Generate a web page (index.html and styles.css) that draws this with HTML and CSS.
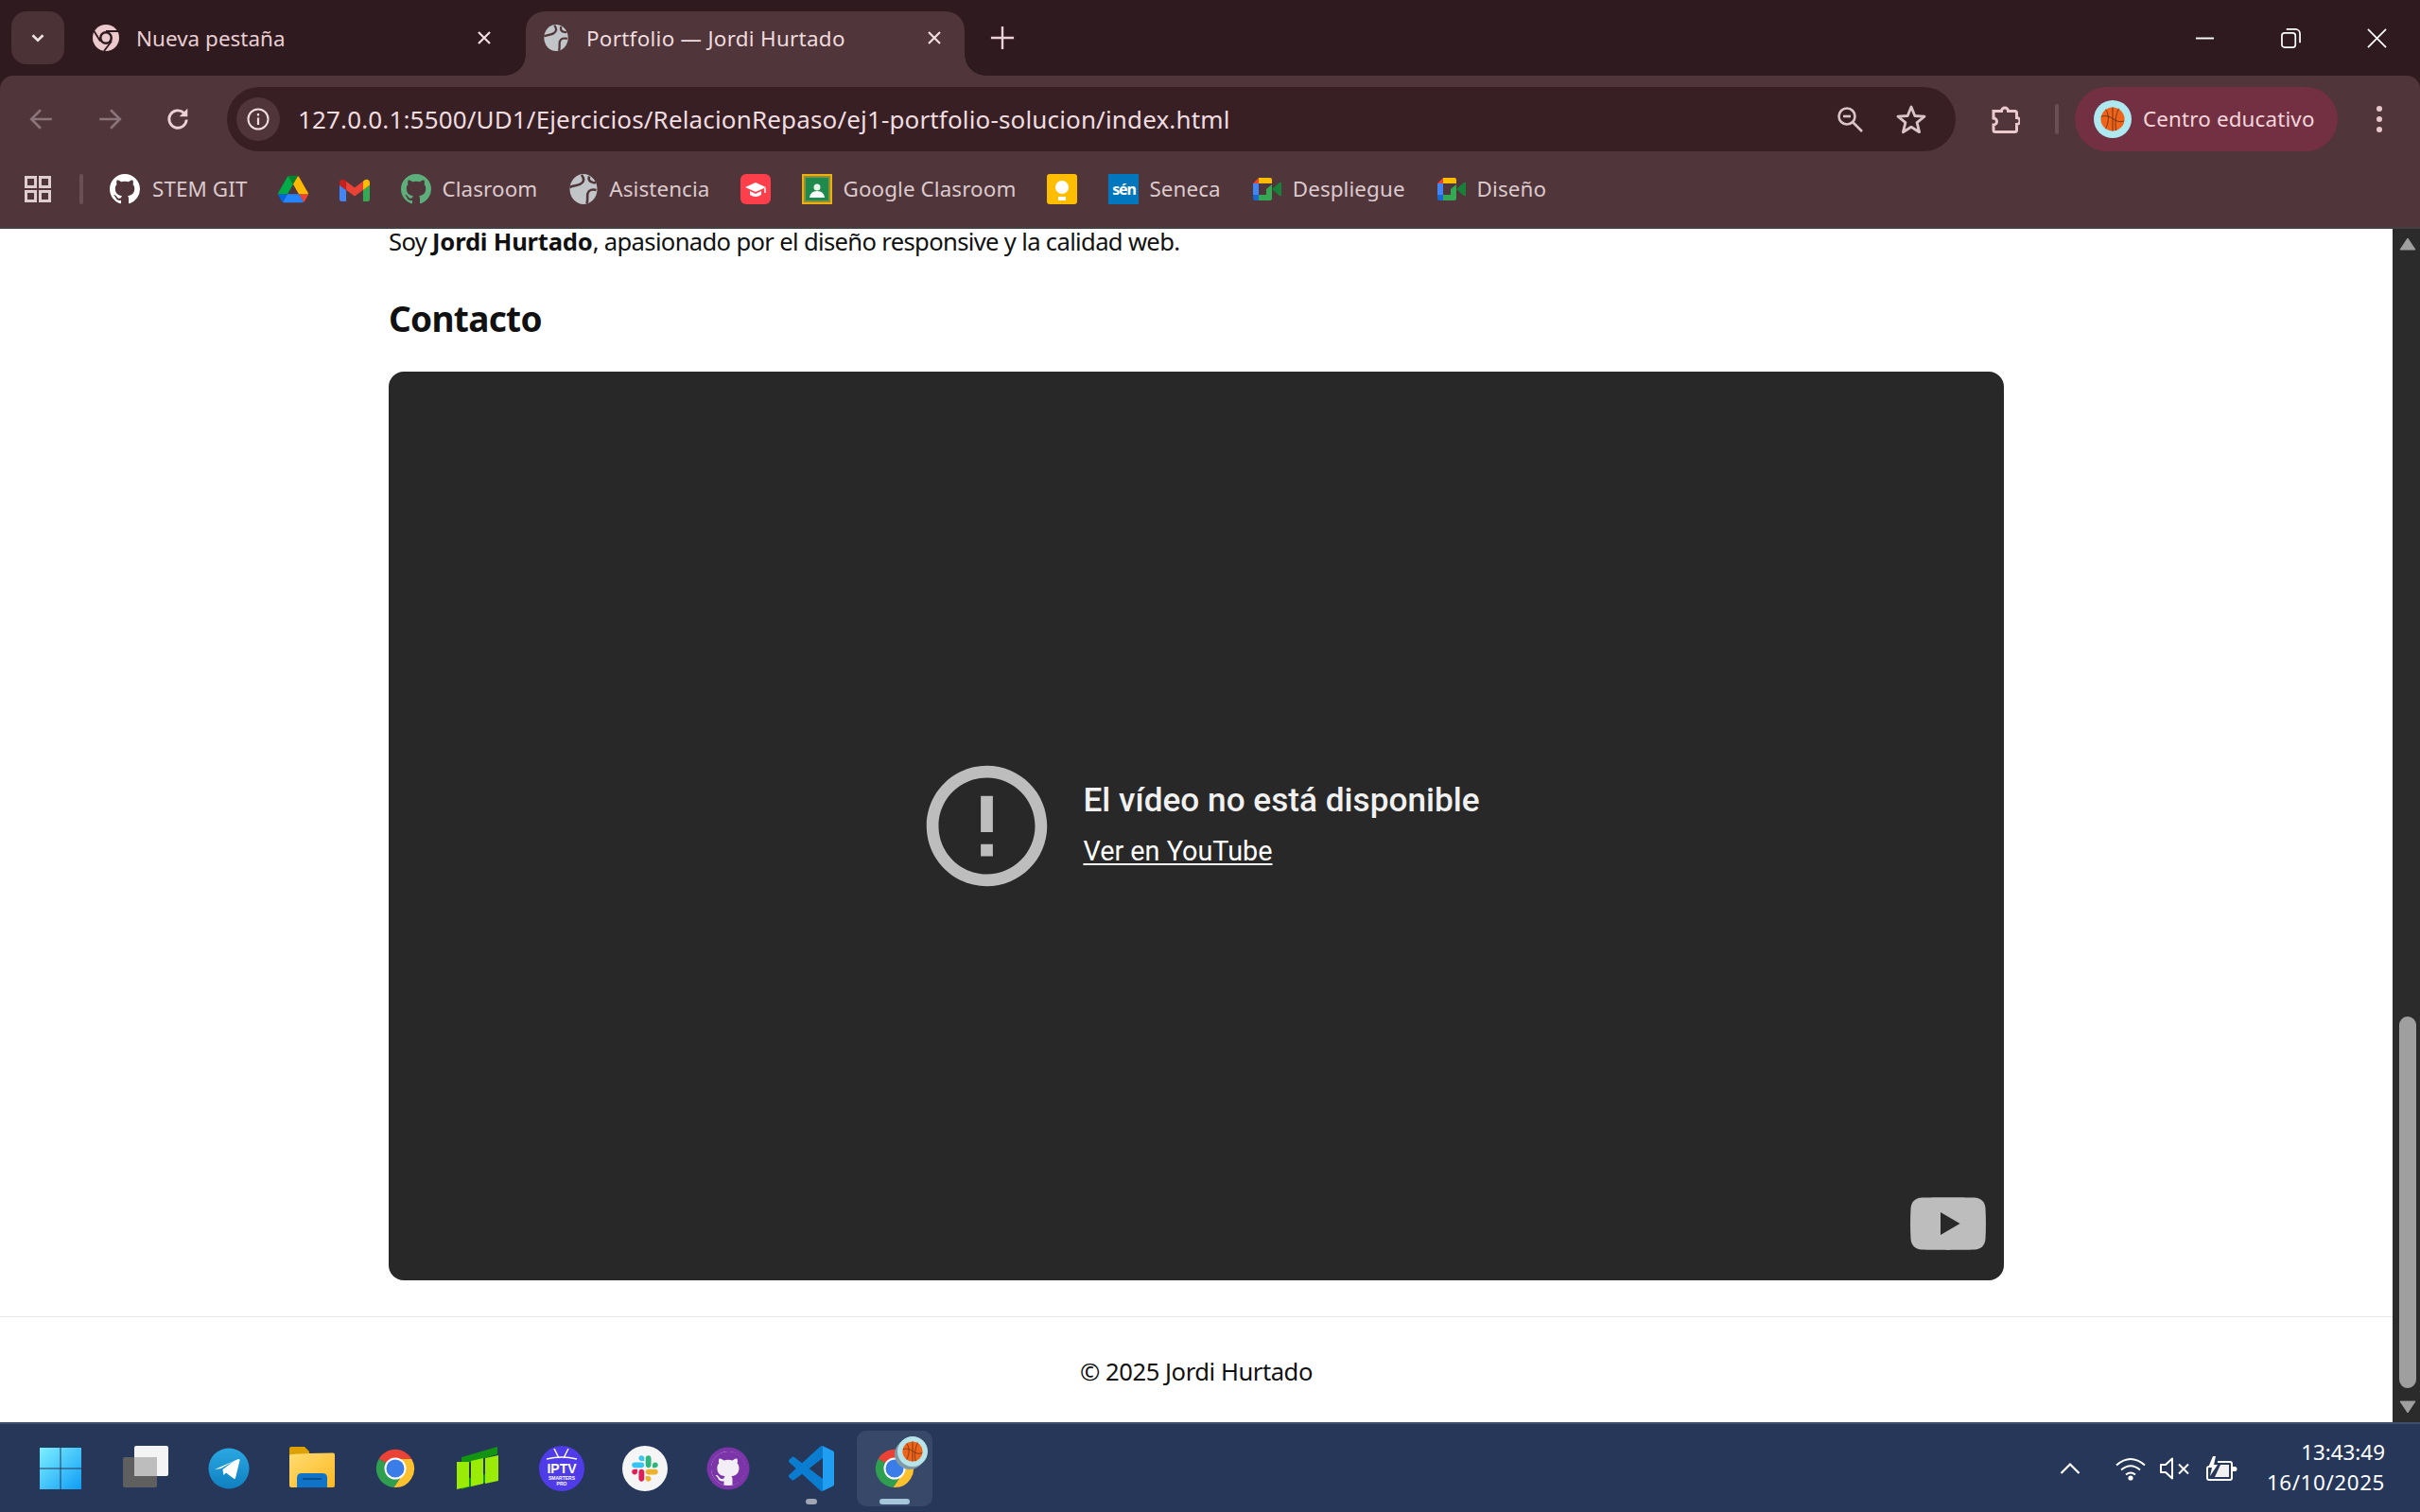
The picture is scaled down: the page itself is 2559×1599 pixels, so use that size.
FILE: index.html
```html
<!DOCTYPE html>
<html lang="es">
<head>
<meta charset="utf-8">
<title>Portfolio — Jordi Hurtado</title>
<link rel="stylesheet" href="styles.css">
</head>
<body>
<svg class="defs" aria-hidden="true">
  <defs>
    <linearGradient id="winG" x1="0" y1="0" x2="1" y2="1"><stop offset="0" stop-color="#7df0ff"/><stop offset="1" stop-color="#0f9cf5"/></linearGradient>
    <linearGradient id="folderG" x1="0" y1="0" x2="1" y2="1"><stop offset="0" stop-color="#ffdc70"/><stop offset="1" stop-color="#fdb924"/></linearGradient>
    <linearGradient id="tgG" x1="0" y1="0" x2="0" y2="1"><stop offset="0" stop-color="#2aa8e2"/><stop offset="1" stop-color="#0f80c0"/></linearGradient>
    <symbol id="octo" viewBox="0 0 24 24"><path d="M12 0C5.37 0 0 5.37 0 12c0 5.3 3.44 9.8 8.2 11.39.6.11.82-.26.82-.58v-2.03c-3.34.73-4.04-1.61-4.04-1.61-.55-1.39-1.33-1.76-1.33-1.76-1.09-.74.08-.73.08-.73 1.2.08 1.84 1.24 1.84 1.24 1.07 1.83 2.81 1.3 3.5 1 .11-.78.42-1.31.76-1.61-2.66-.3-5.46-1.33-5.46-5.93 0-1.31.47-2.38 1.24-3.22-.12-.3-.54-1.52.12-3.18 0 0 1-.32 3.3 1.23a11.5 11.5 0 0 1 6 0c2.29-1.55 3.3-1.23 3.3-1.23.65 1.66.24 2.88.12 3.18.77.84 1.23 1.91 1.23 3.22 0 4.61-2.8 5.63-5.48 5.92.43.37.81 1.1.81 2.22v3.29c0 .32.22.7.83.58A12 12 0 0 0 24 12C24 5.37 18.63 0 12 0z"/></symbol>
    <symbol id="globe" viewBox="0 0 32 32"><ellipse cx="16" cy="16" rx="14.500" ry="16" fill="#c2c5c8"/><path d="M14 1c3 4 3 7-1 9.500-3 2-7 1.500-11.500 3.500M29.500 17c-4-1-8 0-9 3.500-1 3 .5 6-1 11M22 2.500c-1 3 0 6 4 6.500 1 0 2 0 3 .5" fill="none" stroke="#50353a" stroke-width="2.600"/></symbol>
    <symbol id="chromeLogo" viewBox="0 0 48 48"><path fill="#ea4335" d="M6.700 13.700A20 20 0 0 1 41.320 14H24a10 10 0 0 0-8.660 5z"/><path fill="#2f9e50" d="M6.700 13.700 15.340 19A10 10 0 0 0 32.660 29L22.600 44A20 20 0 0 1 6.700 13.700z"/><path fill="#fcc22d" d="M41.320 14H24a10 10 0 0 1 8.660 15L22.600 44A20 20 0 0 0 41.320 14z"/><circle cx="24" cy="24" r="11.500" fill="#fff"/><circle cx="24" cy="24" r="9.500" fill="#3b7de8"/></symbol>
    <symbol id="meet" viewBox="0 0 30 24"><path fill="#fbbc04" d="M6 0h12a2 2 0 0 1 2 2v4H6z"/><path fill="#ea4335" d="M6 0 0 6h6z"/><path fill="#4285f4" d="M0 6h6v12H0z"/><path fill="#1967d2" d="M0 18h6v6H2a2 2 0 0 1-2-2z"/><path fill="#34a853" d="M6 18h8v-6l6-5v15a2 2 0 0 1-2 2H6z"/><path fill="#188038" d="m20 12 8-7q2-1 2 1v12q0 2-2 1l-8-7z"/></symbol>
    <symbol id="ball" viewBox="0 0 28 28"><circle cx="14" cy="14" r="13.500" fill="#f0641a"/><path d="M14 .5v27M1 11c6-2 11 1 14 3s7 4 12 2M6 3c4 5 4 14 0 22M21 2c-3 6-5 15-3 25" fill="none" stroke="#5a2c12" stroke-width=".9"/></symbol>
  </defs>
</svg>

<div class="tabstrip">
  <button class="tab-search" type="button"><svg class="ic-chev" viewBox="0 0 14 10"><path d="m2 2 5 5 5-5" fill="none" stroke="#f0e0e3" stroke-width="2.400"/></svg></button>
  <div class="tab">
    <svg class="tab-fav" viewBox="0 0 28 28"><circle cx="14" cy="14" r="14" fill="#ecc9cd"/><circle cx="14" cy="14" r="7" fill="#2f1a1f"/><circle cx="14" cy="14" r="4.500" fill="#ecc9cd"/><path d="M14 7h13M8 17.500 1.500 7M20 17.500 12 28" stroke="#2f1a1f" stroke-width="1.800" fill="none"/></svg>
    <span class="tab-title">Nueva pestaña</span>
    <svg class="tab-x" viewBox="0 0 16 16"><path d="m2 2 12 12M14 2 2 14" stroke="#f0dfe2" stroke-width="2.200"/></svg>
  </div>
  <div class="tab tab-active">
    <svg class="tab-fav"><use href="#globe"/></svg>
    <span class="tab-title">Portfolio — Jordi Hurtado</span>
    <svg class="tab-x" viewBox="0 0 16 16"><path d="m2 2 12 12M14 2 2 14" stroke="#f0dfe2" stroke-width="2.200"/></svg>
  </div>
  <svg class="tab-new" viewBox="0 0 28 28"><path d="M14 1v26M1 14h26" stroke="#ecd3d7" stroke-width="2.600"/></svg>
  <div class="winctl">
    <span class="winctl-cell"><svg class="ic-win" viewBox="0 0 22 22"><path d="M1 11h20" stroke="#fff" stroke-width="2"/></svg></span>
    <span class="winctl-cell"><svg class="ic-win" viewBox="0 0 22 22"><rect x="1" y="5" width="15" height="16" rx="3" fill="none" stroke="#fff" stroke-width="1.800"/><path d="M6 1h10a5 5 0 0 1 5 5v10" fill="none" stroke="#fff" stroke-width="1.800"/></svg></span>
    <span class="winctl-cell"><svg class="ic-win" viewBox="0 0 22 22"><path d="m1 1 20 20M21 1 1 21" stroke="#fff" stroke-width="1.800"/></svg></span>
  </div>
</div>

<div class="toolbar">
  <div class="navrow">
    <span class="nav-cell"><svg class="ic-nav" viewBox="0 0 24 24"><path d="M22 12H3m8-9-9 9 9 9" fill="none" stroke="#8a757a" stroke-width="2.400"/></svg></span>
    <span class="nav-cell"><svg class="ic-nav" viewBox="0 0 24 24"><path d="M2 12h19m-8-9 9 9-9 9" fill="none" stroke="#8a757a" stroke-width="2.400"/></svg></span>
    <span class="nav-cell"><svg class="ic-nav" viewBox="0 0 24 24"><path d="M20.500 12.500a8.500 8.500 0 1 1-2.500-6.500" fill="none" stroke="#ecd3d7" stroke-width="2.600"/><path d="M21.500 1.500v8h-8z" fill="#ecd3d7"/></svg></span>
    <div class="omnibox">
      <span class="site-info"><svg class="ic-info" viewBox="0 0 24 24"><circle cx="12" cy="12" r="10.500" fill="none" stroke="#f0dfe2" stroke-width="2"/><path d="M12 10.500V18M12 6v2.400" stroke="#f0dfe2" stroke-width="2.200"/></svg></span>
      <span class="url">127.0.0.1:5500/UD1/Ejercicios/RelacionRepaso/ej1-portfolio-solucion/index.html</span>
      <svg class="ic-zoom" viewBox="0 0 28 28"><circle cx="11" cy="11" r="8.500" fill="none" stroke="#d9c4c8" stroke-width="2.600"/><path d="M7 11h8" stroke="#d9c4c8" stroke-width="2.600"/><path d="m17 17 10 10" stroke="#d9c4c8" stroke-width="2.600"/></svg>
      <svg class="ic-star" viewBox="0 0 32 32"><path d="m16 3 3.800 9.500 10.200.7-7.900 6.500 2.500 10L16 24.300 7.400 29.700l2.500-10L2 13.200l10.200-.7z" fill="none" stroke="#d9c4c8" stroke-width="2.800" stroke-linejoin="round"/></svg>
    </div>
    <span class="ext-cell"><svg class="ic-ext" viewBox="0 0 30 32"><path d="M2 7.500h8.500a3.500 3.500 0 0 1 7 0h7q2 0 2 2v5a3.500 3.500 0 0 1 0 7v6q0 2-2 2H4q-2 0-2-2V22a3.500 3.500 0 0 0 0-7z" fill="none" stroke="#ecc9cd" stroke-width="3"/></svg></span>
    <span class="tool-sep"></span>
    <div class="profile">
      <span class="avatar"><svg class="ic-ball"><use href="#ball"/></svg></span>
      <span class="profile-name">Centro educativo</span>
    </div>
    <span class="menu-cell"><svg class="ic-menu" viewBox="0 0 6 28"><circle cx="3" cy="3" r="3" fill="#e6c8cc"/><circle cx="3" cy="14" r="3" fill="#e6c8cc"/><circle cx="3" cy="25" r="3" fill="#e6c8cc"/></svg></span>
  </div>

  <div class="bookmarks">
    <svg class="ic-apps" viewBox="0 0 28 28"><path d="M1.500 1.500h10v10h-10zM16.500 1.500h10v10h-10zM1.500 16.500h10v10h-10zM16.500 16.500h10v10h-10z" fill="none" stroke="#e0cdd1" stroke-width="3"/></svg>
    <span class="bm-sep"></span>
    <span class="bm bm-first"><svg class="fav fav-white"><use href="#octo"/></svg><span class="bm-label">STEM GIT</span></span>
    <span class="bm"><svg class="fav" viewBox="0 0 87.300 78"><path d="m6.600 66.850 3.850 6.650c.8 1.400 1.950 2.500 3.300 3.300l13.750-23.800h-27.500c0 1.550.4 3.100 1.200 4.500z" fill="#0066da"/><path d="m43.650 25-13.750-23.800c-1.350.8-2.500 1.900-3.300 3.300l-25.400 44a9.060 9.060 0 0 0-1.200 4.500h27.500z" fill="#00ac47"/><path d="m73.550 76.800c1.350-.8 2.500-1.900 3.300-3.300l1.600-2.750 7.650-13.250c.8-1.400 1.200-2.950 1.200-4.500h-27.502l5.852 11.500z" fill="#ea4335"/><path d="m43.650 25 13.750-23.800c-1.350-.8-2.900-1.200-4.500-1.200h-18.500c-1.600 0-3.150.45-4.500 1.200z" fill="#00832d"/><path d="m59.800 53h-32.300l-13.750 23.800c1.350.8 2.900 1.200 4.500 1.200h50.800c1.600 0 3.150-.45 4.500-1.200z" fill="#2684fc"/><path d="m73.400 26.500-12.700-22c-.8-1.400-1.950-2.500-3.300-3.300l-13.750 23.800 16.150 28h27.450c0-1.550-.4-3.100-1.200-4.500z" fill="#ffba00"/></svg></span>
    <span class="bm"><svg class="fav" viewBox="0 0 52 42"><path fill="#4285f4" d="M3.500 42h8V22.500L0 14v24.500C0 40.400 1.600 42 3.500 42"/><path fill="#34a853" d="M40.500 42h8c1.900 0 3.500-1.600 3.500-3.500V14L40.500 22.500"/><path fill="#fbbc04" d="M40.500 7.500v15L52 14V9.500c0-4.300-4.900-6.800-8.400-4.200"/><path fill="#ea4335" d="M11.500 22.500v-15L26 18.400 40.500 7.500v15L26 33.300"/><path fill="#c5221f" d="M0 9.500V14l11.500 8.500v-15L8.400 5.300C4.900 2.700 0 5.200 0 9.500"/></svg></span>
    <span class="bm"><svg class="fav fav-green"><use href="#octo"/></svg><span class="bm-label">Clasroom</span></span>
    <span class="bm"><svg class="fav"><use href="#globe"/></svg><span class="bm-label">Asistencia</span></span>
    <span class="bm"><svg class="fav" viewBox="0 0 32 32"><rect width="32" height="32" rx="6" fill="#fc3f4b"/><path d="m16 9 11 5-11 5-11-5z" fill="#fff"/><path d="M10 18v4q6 4 12 0v-4l-6 3z" fill="#fff"/><path d="M26 15v5" stroke="#fff" stroke-width="1.500"/></svg></span>
    <span class="bm"><svg class="fav" viewBox="0 0 32 32"><rect width="32" height="32" fill="#e9b10f"/><rect x="2" y="2" width="28" height="28" fill="#8d8f3a"/><rect x="4" y="4" width="24" height="24" fill="#1f8a4c"/><circle cx="16" cy="14" r="3.500" fill="#e8f3ea"/><path d="M8 25q1-7 8-7t8 7z" fill="#fff"/></svg><span class="bm-label">Google Clasroom</span></span>
    <span class="bm"><svg class="fav" viewBox="0 0 32 32"><rect width="32" height="32" rx="3" fill="#fdbd00"/><circle cx="16" cy="14" r="7" fill="#fff"/><path d="M12 24h8v4h-8z" fill="#fff"/></svg></span>
    <span class="bm"><span class="sen">sén</span><span class="bm-label">Seneca</span></span>
    <span class="bm"><svg class="fav fav-meet"><use href="#meet"/></svg><span class="bm-label">Despliegue</span></span>
    <span class="bm"><svg class="fav fav-meet"><use href="#meet"/></svg><span class="bm-label">Diseño</span></span>
  </div>
</div>

<div class="viewport">
  <div class="page">
    <main class="main">
      <p class="intro">Soy <strong>Jordi Hurtado</strong>, apasionado por el diseño responsive y la calidad web.</p>
      <h2 class="heading">Contacto</h2>
      <div class="video">
        <div class="video-msg">
          <svg class="ic-error" viewBox="0 0 24 24"><path fill="#bdbdbd" d="M11 15h2v2h-2zm0-8h2v6h-2zm.99-5C6.470 2 2 6.480 2 12s4.470 10 9.990 10C17.520 22 22 17.520 22 12S17.520 2 11.990 2zM12 20c-4.420 0-8-3.580-8-8s3.580-8 8-8 8 3.580 8 8-3.580 8-8 8z"/></svg>
          <div class="video-text">
            <div class="video-title">El vídeo no está disponible</div>
            <a class="video-link" href="#">Ver en YouTube</a>
          </div>
        </div>
        <svg class="ic-yt" viewBox="0 0 80 56"><path fill="#bdbdbd" d="M12 .5C24 0 56 0 68 .5 75 1 79 5 79.500 12c.6 10 .6 22 0 32C79 51 75 55 68 55.500 56 56 24 56 12 55.500 5 55 1 51 .5 44c-.6-10-.6-22 0-32C1 5 5 1 12 .5z"/><path fill="#282828" d="M32 16v24l20.500-12z"/></svg>
      </div>
    </main>
    <footer class="footer">© 2025 Jordi Hurtado</footer>
  </div>
  <div class="scrollbar">
    <svg class="sb-arrow" viewBox="0 0 18 14"><path d="M9 1 17 13H1z" fill="#9f9f9f" stroke="#9f9f9f" stroke-linejoin="round"/></svg>
    <div class="sb-track"><span class="sb-thumb"></span></div>
    <svg class="sb-arrow" viewBox="0 0 18 14"><path d="M9 13 1 1h16z" fill="#9f9f9f" stroke="#9f9f9f" stroke-linejoin="round"/></svg>
  </div>
</div>

<div class="taskbar">
  <div class="task-apps">
    <span class="task task-start"><svg class="t-ic" viewBox="0 0 48 48"><g fill="url(#winG)"><path d="M2 2h21.500v21.500H2zM24.500 2H46v21.500H24.500zM2 24.500h21.500V46H2zM24.500 24.500H46V46H24.500z"/></g></svg></span>
    <span class="task"><svg class="t-ic" viewBox="0 0 48 48"><rect x="12" y="0" width="36" height="32" rx="2" fill="#f4f4f4"/><rect x="0" y="12" width="36" height="32" rx="2" fill="#5f5f5f"/><rect x="12" y="12" width="24" height="20" fill="#bdbdbd"/></svg></span>
    <span class="task"><svg class="t-ic" viewBox="0 0 48 48"><circle cx="24" cy="24" r="21.500" fill="url(#tgG)"/><path d="M9 25 34 14q2-.5 1.500 1.500L31 34q-.5 1.500-2 .5l-8-6-2.500 2.500-1-6 12-9-14 8z" fill="#fff"/></svg></span>
    <span class="task"><svg class="t-ic" viewBox="0 0 48 48"><path d="M0 3q0-2 2-2h14l5 5v6H0z" fill="#dfa100"/><path d="M0 11q0-2 2-2l19-1 25-.5q2 0 2 2V42q0 2-2 2H2q-2 0-2-2z" fill="url(#folderG)"/><path d="M8 44V34q0-5 5-5h22q5 0 5 5v10z" fill="#0f74c8"/><path d="M14 35h20" stroke="#0a4f90" stroke-width="2"/></svg></span>
    <span class="task"><svg class="t-ic t-chrome"><use href="#chromeLogo"/></svg></span>
    <span class="task"><svg class="t-ic" viewBox="0 0 48 48"><path d="M6 12 44 1v8L6 20zM6 36l38-9v8L6 46z" fill="#129412"/><path d="M1 17h13v26L1 46zM16 16l13-3v27l-13 3zM31 13l14-3v27l-14 3z" fill="#9aeb06"/></svg></span>
    <span class="task"><svg class="t-ic" viewBox="0 0 48 48"><circle cx="24" cy="24" r="24" fill="#4f3be8"/><path d="m16 3 5 10M31 3l-5 10" stroke="#fff" stroke-width="1.500"/><path d="M8 14q16-4 32 0" fill="none" stroke="#fff" stroke-width="1.500"/><text class="iptv" x="24" y="29">IPTV</text><text class="iptv-sub" x="24" y="36">SMARTERS</text><text class="iptv-sub" x="24" y="42">PRO</text></svg></span>
    <span class="task"><svg class="t-ic" viewBox="0 0 48 48"><circle cx="24" cy="24" r="24" fill="#f5f5f5"/><g transform="translate(10 10) scale(.22)"><path fill="#E01E5A" d="M27.200 80c0 7.300-5.900 13.200-13.200 13.200C6.700 93.200.8 87.300.8 80c0-7.300 5.900-13.200 13.200-13.200h13.200V80zm6.600 0c0-7.300 5.900-13.200 13.200-13.200 7.300 0 13.200 5.900 13.200 13.200v33c0 7.300-5.900 13.200-13.200 13.200-7.300 0-13.200-5.900-13.200-13.200V80z"/><path fill="#36C5F0" d="M47 27c-7.300 0-13.200-5.900-13.200-13.200C33.800 6.500 39.700.6 47 .6c7.300 0 13.200 5.900 13.200 13.200V27H47zm0 6.700c7.300 0 13.200 5.900 13.200 13.200 0 7.300-5.900 13.200-13.200 13.200H13.900C6.600 60.100.7 54.200.7 46.900c0-7.300 5.900-13.200 13.200-13.200H47z"/><path fill="#2EB67D" d="M99.900 46.900c0-7.300 5.900-13.200 13.200-13.200 7.300 0 13.200 5.900 13.200 13.200 0 7.300-5.900 13.200-13.200 13.200H99.900V46.900zm-6.600 0c0 7.300-5.900 13.200-13.200 13.200-7.300 0-13.200-5.900-13.200-13.200V13.800C66.900 6.500 72.800.6 80.100.6c7.300 0 13.200 5.900 13.200 13.200v33.100z"/><path fill="#ECB22E" d="M80.100 99.800c7.300 0 13.200 5.900 13.200 13.200 0 7.300-5.900 13.200-13.200 13.200-7.300 0-13.200-5.900-13.200-13.200V99.800h13.200zm0-6.600c-7.300 0-13.200-5.900-13.200-13.200 0-7.300 5.900-13.200 13.200-13.200h33.100c7.300 0 13.200 5.900 13.200 13.200 0 7.300-5.900 13.200-13.200 13.200H80.100z"/></g></svg></span>
    <span class="task"><svg class="t-ic" viewBox="0 0 48 48"><circle cx="24" cy="24" r="22.500" fill="#7b35a8"/><circle cx="24" cy="24" r="18" fill="#f3eef6"/><path d="M24 6a18 18 0 0 0-5.700 35.100c.9.2 1.200-.4 1.200-.9v-3c-5 1.100-6.100-2.400-6.100-2.400-.8-2.100-2-2.600-2-2.600-1.600-1.100.1-1.100.1-1.100 1.800.1 2.800 1.900 2.800 1.900 1.600 2.700 4.200 2 5.200 1.500.2-1.200.6-2 1.100-2.400-4-.5-8.200-2-8.200-8.900 0-2 .7-3.600 1.900-4.800-.2-.5-.8-2.300.2-4.800 0 0 1.500-.5 5 1.800a17 17 0 0 1 9 0c3.400-2.300 4.900-1.800 4.900-1.800 1 2.500.4 4.300.2 4.800 1.200 1.200 1.900 2.900 1.900 4.800 0 6.900-4.200 8.400-8.200 8.900.6.600 1.200 1.700 1.200 3.300v4.900c0 .5.300 1 1.200.9A18 18 0 0 0 24 6z" fill="#7b35a8"/></svg></span>
    <span class="task task-open"><svg class="t-ic" viewBox="0 0 100 100"><path fill="#0a7dd0" d="M96.500 10.800 75.900.9a6.200 6.200 0 0 0-7.100 1.200L29.400 38 12.200 25a4.200 4.200 0 0 0-5.300.2L1.400 30.200a4.200 4.200 0 0 0 0 6.200L16.300 50 1.400 63.600a4.200 4.200 0 0 0 0 6.200l5.500 5a4.200 4.200 0 0 0 5.300.2l17.200-13 39.400 35.900a6.200 6.200 0 0 0 7.100 1.200l20.600-9.900a6.200 6.200 0 0 0 3.500-5.600V16.400a6.200 6.200 0 0 0-3.500-5.600zM75 72.700 45.100 50 75 27.300z"/><path fill="#1f9ef2" d="M75 .6 96.500 10.800a6.200 6.200 0 0 1 3.500 5.600v67.200a6.200 6.200 0 0 1-3.500 5.600L75 99.400z"/></svg></span>
    <span class="task task-active">
      <svg class="t-ic t-chrome"><use href="#chromeLogo"/></svg>
      <span class="t-badge"><svg class="t-badge-ball"><use href="#ball"/></svg></span>
    </span>
  </div>
  <div class="tray">
    <svg class="tr-chev" viewBox="0 0 22 14"><path d="m1.500 12 9.500-9.500 9.500 9.500" fill="none" stroke="#fff" stroke-width="2.200"/></svg>
    <svg class="tr-wifi" viewBox="0 0 32 26"><path d="M1 9.500q15-13 30 0M6 14.500q10-8.500 20 0M11 19.500q5-4 10 0" fill="none" stroke="#fff" stroke-width="2"/><circle cx="16" cy="23" r="2.600" fill="#fff"/></svg>
    <svg class="tr-sound" viewBox="0 0 32 24"><path d="M1 8h5l7-6.500v21L6 16H1z" fill="none" stroke="#fff" stroke-width="2" stroke-linejoin="round"/><path d="m20 7.500 10 10M30 7.500l-10 10" stroke="#fff" stroke-width="2"/></svg>
    <svg class="tr-bat" viewBox="0 0 33 27"><path d="M4 11v-1M7 12H3a2 2 0 0 0-2 2v10a2 2 0 0 0 2 2h22a2 2 0 0 0 2-2V9a2 2 0 0 0-2-2H12" fill="none" stroke="#fff" stroke-width="2"/><path d="M28 12h2q2.500 0 2.500 2.500t-2.500 2.500h-2z" fill="#fff"/><path d="M7 1 2 13h4l-2 9 8-12H8l2-9z" fill="#fff"/><path d="M9 23l6-13h9v13z" fill="#f1f1f1"/></svg>
    <div class="clock"><span class="clock-time">13:43:49</span><span class="clock-date">16/10/2025</span></div>
  </div>
</div>
</body>
</html>
```

FILE: styles.css
```css
* { box-sizing: border-box; }
html, body { margin: 0; padding: 0; height: 100%; overflow: hidden; }
body {
  width: 2559px;
  height: 1599px;
  display: flex;
  flex-direction: column;
  font-family: "Noto Sans", "Open Sans", sans-serif;
  background: #2f1a1f;
}
.defs { display: block; width: 0; height: 0; }
svg { display: block; flex: none; }

/* tab strip */
.tabstrip {
  height: 80px;
  background: #2f1a1f;
  display: flex;
  align-items: flex-start;
  padding: 12px 0 0 12px;
  flex: none;
}
.tab-search {
  width: 56px; height: 56px;
  border: 0; padding: 0;
  border-radius: 16px;
  background: #4a3237;
  display: flex; align-items: center; justify-content: center;
}
.ic-chev { width: 16px; height: 11px; }
.tab {
  width: 488px; height: 68px;
  padding: 0 36px 12px 30px;
  display: flex; align-items: center; gap: 18px;
  color: #e9cfd3;
  font-size: 22.400px;
  letter-spacing: .05px;
  position: relative;
}
.tab-active {
  width: 464px;
  padding-left: 18px;
  padding-right: 24px;
  background: #50353a;
  border-radius: 20px 20px 0 0;
  color: #efdcdf;
  letter-spacing: .3px;
}
.tab-active::before, .tab-active::after {
  content: "";
  position: absolute;
  bottom: 0;
  width: 22px; height: 22px;
}
.tab-active::before { left: -22px; background: radial-gradient(circle at 0 0, transparent 21.500px, #50353a 22px); }
.tab-active::after { right: -22px; background: radial-gradient(circle at 100% 0, transparent 21.500px, #50353a 22px); }
.tab-fav { width: 28px; height: 28px; }
.tab-title { flex: 1; white-space: nowrap; }
.tab-x { width: 16px; height: 16px; }
.tab-new { width: 26px; height: 26px; margin: 15px 0 0 27px; }
.winctl { margin-left: auto; display: flex; margin-top: -12px; height: 80px; }
.winctl-cell { width: 91px; display: flex; align-items: center; justify-content: center; }
.ic-win { width: 21px; height: 21px; }

/* toolbar */
.toolbar {
  height: 162px;
  flex: none;
  background: #50353a;
  border-bottom: 2px solid #443f40;
  border-radius: 14px 14px 0 0;
  display: flex; flex-direction: column;
}
.navrow { height: 80px; padding: 12px 0 0 8px; display: flex; align-items: flex-start; }
.nav-cell { width: 72px; height: 68px; display: flex; align-items: center; justify-content: center; }
.ic-nav { width: 26px; height: 26px; }
.omnibox {
  width: 1828px; height: 68px;
  margin-left: 16px;
  background: #381f24;
  border-radius: 34px;
  display: flex; align-items: center;
  padding: 0 31.500px 0 10px;
}
.site-info {
  width: 46px; height: 46px; border-radius: 50%;
  background: #50353a;
  display: flex; align-items: center; justify-content: center;
}
.ic-info { width: 24px; height: 24px; }
.url {
  margin-left: 19px;
  flex: 1;
  color: #efdde0;
  font-size: 26px;
  letter-spacing: .15px;
  white-space: nowrap;
}
.ic-zoom { width: 28px; height: 28px; margin-right: 35px; }
.ic-star { width: 32px; height: 32px; }
.ext-cell { width: 72px; height: 68px; margin-left: 17px; display: flex; align-items: center; justify-content: center; }
.ic-ext { width: 30px; height: 32px; }
.tool-sep { width: 4px; height: 32px; margin: 18px 17px 0 16px; background: #6a5055; border-radius: 2px; }
.profile {
  width: 278px; height: 68px;
  border-radius: 34px;
  background: #733043;
  display: flex; align-items: center; gap: 12px;
  padding-left: 20px;
  color: #f3d6db;
  font-size: 22.400px;
  letter-spacing: .15px;
  white-space: nowrap;
}
.profile-name { padding-bottom: 2px; }
.avatar { width: 40px; height: 40px; border-radius: 50%; background: #aee8f0; display: flex; align-items: center; justify-content: center; flex: none; }
.ic-ball { width: 26px; height: 26px; }
.menu-cell { width: 87px; height: 68px; display: flex; align-items: center; justify-content: center; }
.ic-menu { width: 6px; height: 28px; }

.bookmarks { height: 80px; display: flex; align-items: center; padding: 0 0 0 26px; }
.ic-apps { width: 28px; height: 28px; }
.bm-sep { width: 4px; height: 32px; margin: 0 28px 0 30px; background: #6a5055; border-radius: 2px; }
.bm {
  display: flex; align-items: center; gap: 11px;
  margin-right: 33px;
  color: #dccacd;
  font-size: 22.400px;
  letter-spacing: .1px;
  white-space: nowrap;
}
.bm-first { gap: 13px; }
.bm-label { padding-bottom: 2px; }
.fav { width: 32px; height: 32px; }
.fav-white { fill: #fff; }
.fav-green { fill: #5eae7c; }
.fav-meet { height: 24px; }
.sen {
  width: 32px; height: 32px;
  background: #0277bd; color: #fff;
  font-weight: 700; font-size: 16px; letter-spacing: -1.200px;
  display: flex; align-items: center; justify-content: center;
}

/* page */
.viewport { flex: 1; min-height: 0; display: flex; background: #fff; }
.page { flex: 1; min-width: 0; display: flex; flex-direction: column; color: #111; }
.main { width: 1708px; margin: 0 auto; flex: 1; }
.intro { margin: 0; height: 28px; line-height: 28px; font-size: 25.600px; letter-spacing: -.66px; white-space: nowrap; }
.intro strong { font-weight: 700; letter-spacing: -.2px; }
.heading { margin: 45px 0 34px; height: 44px; line-height: 44px; font-size: 37px; font-weight: 700; letter-spacing: -.7px; }
.video {
  height: 961px;
  background: #282828;
  border-radius: 16px;
  position: relative;
  display: flex; align-items: center; justify-content: center;
}
.video-msg { display: flex; align-items: center; gap: 25px; padding-left: 2px; margin-top: -1px; font-family: Roboto, sans-serif; color: #f1f1f1; }
.ic-error { width: 153px; height: 153px; }
.video-text { display: flex; flex-direction: column; gap: 16px; padding-bottom: 3px; }
.video-title { font-size: 35.200px; font-weight: 500; line-height: 40px; white-space: nowrap; }
.video-link { color: #fff; font-size: 28.800px; line-height: 36px; text-decoration: underline; text-underline-offset: 3px; text-decoration-thickness: 2px; white-space: nowrap; }
.ic-yt { position: absolute; right: 19px; bottom: 32px; width: 80px; height: 56px; }
.footer {
  height: 112px;
  border-top: 1px solid #e8e8e8;
  padding-top: 3px;
  display: flex; align-items: center; justify-content: center;
  font-size: 25.600px; letter-spacing: -.45px;
  flex: none;
}
.scrollbar {
  width: 29px; flex: none;
  background: #2b2b2b;
  display: flex; flex-direction: column; align-items: center;
  padding: 9px 0 9px 2px;
}
.sb-arrow { width: 18px; height: 14px; }
.sb-track { flex: 1; width: 100%; display: flex; flex-direction: column; justify-content: flex-end; padding-bottom: 13px; align-items: center; }
.sb-thumb { width: 18px; height: 393px; background: #9f9f9f; border-radius: 9px; }

/* taskbar */
.taskbar {
  height: 95px; flex: none;
  background: #26375a;
  border-top: 2px solid #3f4e6c;
  display: flex; align-items: center;
  padding-left: 24px;
  color: #fff;
}
.task-apps { display: flex; gap: 8px; }
.task { width: 80px; height: 80px; display: flex; align-items: center; justify-content: center; position: relative; }
.task-start { margin-right: 2px; }
.t-ic { width: 48px; height: 48px; }
.task-open::after, .task-active::after {
  content: ""; position: absolute; left: 50%; transform: translateX(-50%);
  bottom: 2px; height: 6px; border-radius: 3px;
}
.task-open::after { width: 12px; background: #a0a6b2; }
.task-active { background: #384868; border-radius: 10px; }
.task-active::after { width: 32px; background: #a5c6da; }
.t-badge {
  position: absolute; top: 6px; right: 5px;
  width: 32px; height: 32px; border-radius: 50%;
  background: #b6e4e8;
  box-shadow: -3px 3px 0 #7e9aa8;
  display: flex; align-items: center; justify-content: center;
}
.t-badge-ball { width: 22px; height: 22px; }
.iptv { font: 700 14px "Liberation Sans", sans-serif; fill: #fff; text-anchor: middle; }
.iptv-sub { font: 700 5px "Liberation Sans", sans-serif; fill: #fff; text-anchor: middle; }

.tray { margin-left: auto; display: flex; align-items: center; padding-right: 37px; }
.tr-chev { width: 22px; height: 14px; margin-right: 37px; }
.tr-wifi { width: 32px; height: 26px; margin-right: 15px; }
.tr-sound { width: 32px; height: 24px; margin-right: 17px; }
.tr-bat { width: 33px; height: 27px; margin-right: 31px; }
.clock {
  display: flex; flex-direction: column; align-items: flex-end;
  font-size: 22.400px; line-height: 32px;
  padding-bottom: 2px;
}
.clock-date { letter-spacing: .6px; }
```
